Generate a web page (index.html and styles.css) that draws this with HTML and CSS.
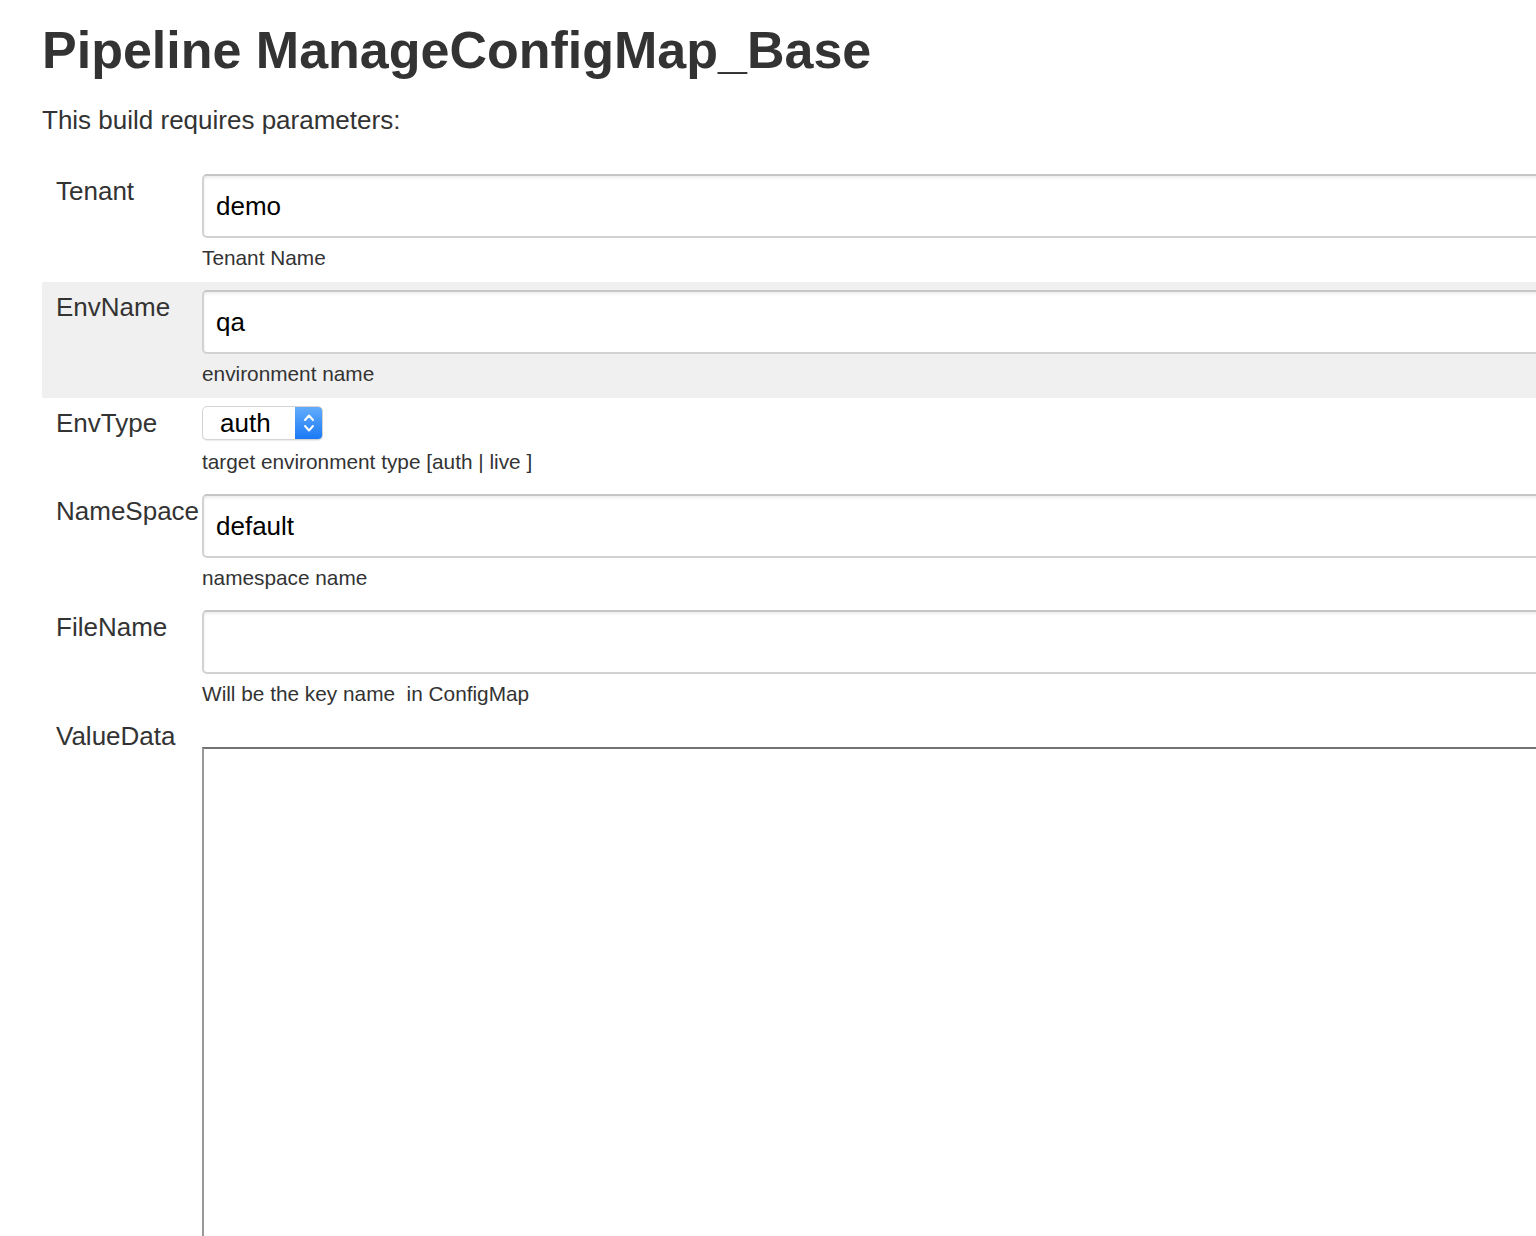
FILE: index.html
```html
<!DOCTYPE html>
<html lang="en">
<head>
<meta charset="utf-8">
<title>Pipeline ManageConfigMap_Base</title>
<link rel="stylesheet" href="styles.css">
</head>
<body>
<div class="page">
  <h1 class="title">Pipeline ManageConfigMap_Base</h1>
  <p class="intro">This build requires parameters:</p>
  <div class="params">
    <div class="row">
      <div class="label">Tenant</div>
      <div class="field">
        <input class="text" type="text" value="demo">
        <div class="desc">Tenant Name</div>
      </div>
    </div>
    <div class="row row-alt">
      <div class="label">EnvName</div>
      <div class="field">
        <input class="text" type="text" value="qa">
        <div class="desc">environment name</div>
      </div>
    </div>
    <div class="row">
      <div class="label">EnvType</div>
      <div class="field">
        <span class="select-wrap">
          <select class="select"><option>auth</option><option>live</option></select>
          <span class="select-btn">
            <svg width="12" height="24" viewBox="0 0 12 24" aria-hidden="true">
              <path d="M2 9 L6 4.5 L10 9" fill="none" stroke="#fff" stroke-width="2" stroke-linecap="round" stroke-linejoin="round"/>
              <path d="M2 15 L6 19.5 L10 15" fill="none" stroke="#fff" stroke-width="2" stroke-linecap="round" stroke-linejoin="round"/>
            </svg>
          </span>
        </span>
        <div class="desc">target environment type [auth | live ]</div>
      </div>
    </div>
    <div class="row">
      <div class="label">NameSpace</div>
      <div class="field">
        <input class="text" type="text" value="default">
        <div class="desc">namespace name</div>
      </div>
    </div>
    <div class="row">
      <div class="label">FileName</div>
      <div class="field">
        <input class="text" type="text" value="">
        <div class="desc">Will be the key name&nbsp; in ConfigMap</div>
      </div>
    </div>
    <div class="row row-text">
      <div class="label">ValueData</div>
      <div class="field">
        <textarea class="area"></textarea>
      </div>
    </div>
  </div>
</div>
</body>
</html>
```
FILE: styles.css
```css
html {
  overflow: hidden;
}
body {
  margin: 0;
  background: #fff;
  color: #333;
  font-family: "Liberation Sans", Arial, Helvetica, sans-serif;
}
.page {
  padding: 20px 0 0 42px;
  width: 1700px;
}
.title {
  margin: 0;
  font-size: 52px;
  font-weight: bold;
  line-height: 60px;
  color: #333;
}
.intro {
  margin: 22px 0 0 0;
  font-size: 26px;
  line-height: 36px;
}
.params {
  margin-top: 28px;
}
.row {
  display: flex;
  padding: 8px 0 10px;
}
.row-alt {
  background: #f0f0f0;
}
.row-text {
  padding-top: 1px;
  padding-bottom: 0;
}
.label {
  flex: 0 0 146px;
  padding-left: 14px;
  font-size: 26px;
  line-height: 34px;
  white-space: nowrap;
}
.field {
  flex: 1 1 auto;
  display: flex;
  flex-direction: column;
  align-items: flex-start;
}
.text {
  box-sizing: border-box;
  width: 1500px;
  height: 64px;
  margin: 0;
  padding: 0 12px;
  border: 2px solid #d2d2d2;
  border-top-color: #c6c6c6;
  border-radius: 5px;
  box-shadow: inset 0 2px 3px rgba(0, 0, 0, 0.07);
  background: #fff;
  font-family: "Liberation Sans", Arial, Helvetica, sans-serif;
  font-size: 26px;
  color: #000;
  outline: none;
}
.desc {
  margin-top: 6px;
  font-size: 20.8px;
  line-height: 28px;
  color: #333;
  white-space: pre;
}
.select-wrap {
  display: inline-flex;
  align-items: stretch;
  height: 34px;
  margin: 0 0 2px;
  box-sizing: border-box;
  border: 1px solid #d4d4d4;
  border-radius: 5px;
  background: #fff;
  box-shadow: 0 1px 1px rgba(0, 0, 0, 0.08);
  overflow: hidden;
}
.select {
  -webkit-appearance: none;
  appearance: none;
  width: 92px;
  margin: 0;
  padding: 0 0 0 17px;
  border: 0;
  background: transparent;
  font-family: "Liberation Sans", Arial, Helvetica, sans-serif;
  font-size: 26px;
  color: #000;
  outline: none;
}
.select-btn {
  display: flex;
  align-items: center;
  justify-content: center;
  width: 27px;
  background: linear-gradient(#63acfb, #1a7af6);
}
.area {
  box-sizing: border-box;
  width: 1500px;
  height: 600px;
  margin: 28px 0 0;
  border: 2px solid #999;
  border-top-color: #727272;
  border-right-color: #ccc;
  border-bottom-color: #ccc;
  border-radius: 0;
  background: #fff;
  resize: none;
  outline: none;
}
```
